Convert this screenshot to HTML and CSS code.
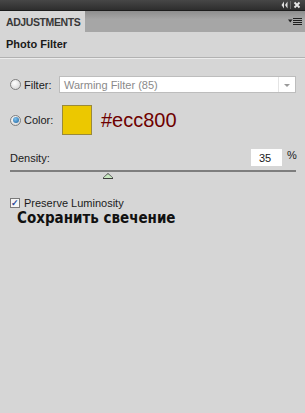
FILE: index.html
```html
<html>
<head>
<meta charset="utf-8">
<link rel="stylesheet" href="styles.css">
</head>
<body>
<div class="topbar">
	<svg width="22" height="8" viewBox="0 0 22 8">
		<path d="M3 0.5L0.5 4 3 7.5zM6.5 0.5L4 4 6.5 7.5z" fill="#e0e0e0"/>
		<path d="M9.5 0v8" stroke="#6a6a6a" stroke-width="1"/>
		<path d="M13.5 1.5l5 5M18.5 1.5l-5 5" stroke="#e8e8e8" stroke-width="1.8"/>
	</svg>
</div>
<div class="tabs">
	<div class="tab">ADJUSTMENTS</div>
	<div class="menu">
		<svg width="14" height="8" viewBox="0 0 14 8">
			<path d="M0 1.5h4.5l-2.25 3z" fill="#222"/>
			<path d="M5 0.5h9M5 2.5h9M5 4.5h9M5 6.5h9" stroke="#1e1e1e" stroke-width="1"/>
		</svg>
	</div>
</div>
<div class="panel">
	<div class="title">Photo Filter</div>
	<div class="row filter_row">
		<span class="radio"></span>
		<span class="label">Filter:</span>
		<div class="select">
			<span>Warming Filter (85)</span>
			<span class="arrow"></span>
		</div>
	</div>
	<div class="row color_row">
		<span class="radio on"></span>
		<span class="label">Color:</span>
		<span class="swatch"></span>
		<span class="hex">#ecc800</span>
	</div>
	<div class="density">
		<span>Density:</span>
		<span class="value">35</span>
		<span class="pct">%</span>
	</div>
	<div class="slider"><span class="thumb"></span></div>
	<div class="preserve">
		<span class="check">&#10003;</span>
		<span>Preserve Luminosity</span>
	</div>
	<div class="note">Сохранить свечение</div>
</div>
</body>
</html>
```
FILE: styles.css
```css
body {
	margin: 0;
	width: 305px;
	height: 413px;
	background-color: #d6d6d6;
	font-family: "Liberation Sans", Arial, sans-serif;
	font-size: 11px;
	color: #1a1a1a;
	overflow: hidden;
}

.topbar {
	height: 10px;
	background: linear-gradient(#474747, #2e2e2e);
	display: flex;
	justify-content: flex-end;
	align-items: center;
	padding-right: 2px;
}

.tabs {
	height: 21px;
	display: flex;
	background: linear-gradient(#8e8e8e, #a6a6a6 40%, #a6a6a6);
	border-top: 1px solid #1c1c1c;
}
.tab {
	width: 79px;
	padding-left: 6px;
	background-color: #d6d6d6;
	font-weight: bold;
	font-size: 10.5px;
	letter-spacing: -0.4px;
	color: #383838;
	line-height: 22px;
}
.menu {
	flex: 1;
	display: flex;
	justify-content: flex-end;
	align-items: center;
	padding-right: 3px;
}

.panel {
	padding: 0 9px 0 10px;
}
.title {
	font-weight: bold;
	margin: 5px -9px 0 -10px;
	padding-left: 6px;
	height: 20px;
	line-height: 14px;
	border-bottom: 1px solid #b2b2b2;
	box-shadow: 0 1px 0 #ececec;
}

.row {
	display: flex;
	align-items: center;
}
.filter_row {
	margin-top: 17px;
	height: 19px;
}
.color_row {
	margin-top: 11px;
	height: 30px;
}
.radio {
	width: 11px;
	height: 11px;
	border-radius: 50%;
	border: 1px solid #7f7f7f;
	background: radial-gradient(circle at 40% 35%, #ffffff, #cfcfcf);
	box-sizing: border-box;
	position: relative;
}
.radio.on::after {
	content: "";
	position: absolute;
	left: 1.5px;
	top: 1.5px;
	width: 6px;
	height: 6px;
	border-radius: 50%;
	background: radial-gradient(circle at 40% 35%, #7fc3f0, #1a5f9c);
}
.label {
	margin-left: 3px;
	width: 35px;
}
.select {
	flex: 1;
	height: 17px;
	box-sizing: border-box;
	background-color: #fff;
	border: 1px solid #bdbdbd;
	display: flex;
	align-items: center;
	justify-content: space-between;
	padding-left: 4px;
	color: #8a8a8a;
}
.arrow {
	width: 16px;
	height: 100%;
	border-left: 1px solid #e4e4e4;
	position: relative;
}
.arrow::after {
	content: "";
	position: absolute;
	left: 5px;
	top: 7px;
	border-left: 3px solid transparent;
	border-right: 3px solid transparent;
	border-top: 3px solid #9a9a9a;
}
.swatch {
	margin-left: 3px;
	width: 30px;
	height: 30px;
	box-sizing: border-box;
	background-color: #ecc800;
	border: 1px solid #9a8a3a;
}
.hex {
	margin-left: 9px;
	font-family: "Liberation Sans", Arial, sans-serif;
	font-size: 20px;
	color: #6e0000;
}

.density {
	margin-top: 14px;
	display: flex;
	align-items: center;
	height: 17px;
}
.density .value {
	margin-left: auto;
	width: 31px;
	height: 17px;
	box-sizing: border-box;
	background-color: #fff;
	padding: 2px 0 0 8px;
	line-height: 14px;
}
.density .pct {
	margin-left: 5px;
	width: 9px;
	align-self: flex-start;
}
.slider {
	margin-top: 4px;
	height: 2px;
	background-color: #7e7e7e;
	position: relative;
}
.thumb {
	position: absolute;
	left: 93px;
	top: 3px;
	width: 10px;
	height: 6px;
	background-color: #3c3c3c;
	clip-path: polygon(50% 0, 100% 80%, 100% 100%, 0 100%, 0 80%);
}
.thumb::after {
	content: "";
	position: absolute;
	left: 1px;
	top: 1px;
	width: 8px;
	height: 4px;
	background-color: #c8e8c0;
	clip-path: polygon(50% 0, 100% 80%, 100% 100%, 0 100%, 0 80%);
}

.preserve {
	margin-top: 25px;
	display: flex;
	align-items: center;
	height: 11px;
}
.check {
	width: 10px;
	height: 10px;
	box-sizing: border-box;
	border: 1px solid #7a7a7a;
	background-color: #f6f6f6;
	color: #2a4a9a;
	font-size: 9px;
	line-height: 8px;
	text-align: center;
	margin-right: 4px;
	font-weight: bold;
}
.note {
	margin: 1px 0 0 7px;
	font-family: "DejaVu Sans Condensed", "DejaVu Sans", sans-serif;
	font-size: 15px;
	font-weight: bold;
	color: #111;
}
```
